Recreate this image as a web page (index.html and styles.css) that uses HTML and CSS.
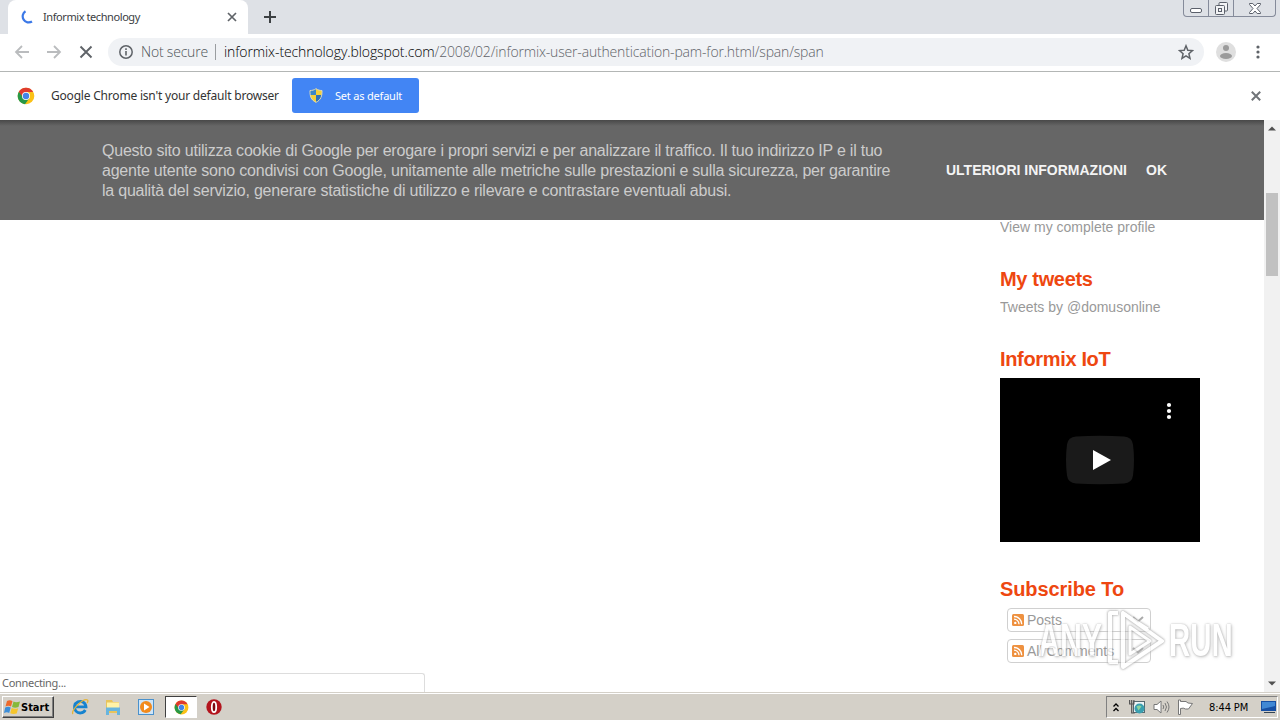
FILE: index.html
```html
<!DOCTYPE html>
<html lang="en">
<head>
  <meta charset="UTF-8">
  <title>Informix technology</title>
  <link rel="stylesheet" href="styles.css">
</head>
<body>
  <!-- Tab strip -->
  <div class="tabstrip">
    <div class="tab">
      <svg class="spinner" width="14" height="14" viewBox="0 0 14 14"><path d="M5.500 1.300A6 6 0 1 0 12 11.500" fill="none" stroke="#3b78e7" stroke-width="2.200"/></svg>
      <span class="tab-title">Informix technology</span>
      <svg width="10" height="10" viewBox="0 0 10 10"><path d="M1 1l8 8M9 1l-8 8" stroke="#5f6368" stroke-width="1.7"/></svg>
    </div>
    <svg class="new-tab" width="12" height="12" viewBox="0 0 12 12"><path d="M6 0v12M0 6h12" stroke="#3c4043" stroke-width="2"/></svg>
    <div class="win-buttons">
      <div class="win-btn"><svg width="12" height="5" viewBox="0 0 12 5"><rect x=".5" y=".5" width="11" height="4" rx="1.5" fill="#fff" stroke="#5b606b"/></svg></div>
      <div class="win-btn"><svg width="13" height="13" viewBox="0 0 13 13" fill="#f2f3f5" stroke="#5b606b"><rect x="4" y=".5" width="8.500" height="8.500" rx="1"/><rect x=".5" y="3.500" width="9" height="9" rx="1"/><rect x="3.500" y="6.500" width="3" height="3"/></svg></div>
      <div class="win-btn wide"><svg width="12" height="11" viewBox="0 0 12 11"><path d="M.5.5h3.300L6 3 8.200.5h3.300v1L8 5.500l3.500 4v1H8.200L6 8l-2.200 2.500H.5v-1L4 5.500l-3.500-4z" fill="#fff" stroke="#5b606b"/></svg></div>
    </div>
  </div>

  <!-- Toolbar -->
  <div class="toolbar">
    <div class="nav">
      <svg width="16" height="14" viewBox="0 0 16 14"><path d="M15 7H2M8 1L2 7l6 6" fill="none" stroke="#babcbe" stroke-width="1.800"/></svg>
      <svg width="16" height="14" viewBox="0 0 16 14"><path d="M1 7h13M8 1l6 6-6 6" fill="none" stroke="#babcbe" stroke-width="1.800"/></svg>
      <svg class="stop" width="14" height="14" viewBox="0 0 14 14"><path d="M1.500 1.500l11 11M12.500 1.500l-11 11" stroke="#5f6368" stroke-width="1.900"/></svg>
    </div>
    <div class="omnibox">
      <svg width="14" height="14" viewBox="0 0 14 14"><circle cx="7" cy="7" r="6.200" fill="none" stroke="#5f6368" stroke-width="1.500"/><path d="M7 6v4.500M7 3.300v1.600" stroke="#5f6368" stroke-width="1.600"/></svg>
      <span class="not-secure">Not secure</span>
      <span class="divider"></span>
      <span class="url"><span class="host">informix-technology.blogspot.com</span><span class="path">/2008/02/informix-user-authentication-pam-for.html/span/span</span></span>
      <svg class="star" width="16" height="16" viewBox="0 0 16 16"><path d="M8 1.800l1.800 4.400 4.700.4-3.600 3.100 1.100 4.600L8 11.800l-4 2.500 1.100-4.600-3.600-3.100 4.700-.4z" fill="none" stroke="#5f6368" stroke-width="1.500"/></svg>
    </div>
    <svg class="avatar" width="20" height="20" viewBox="0 0 20 20"><circle cx="10" cy="10" r="10" fill="#dfdfdf"/><circle cx="10" cy="6" r="3" fill="#9b9b9b"/><ellipse cx="10" cy="14" rx="6" ry="3" fill="#9b9b9b"/></svg>
    <svg class="menu" width="4" height="14" viewBox="0 0 4 14" fill="#5f6368"><circle cx="2" cy="2" r="1.600"/><circle cx="2" cy="7" r="1.600"/><circle cx="2" cy="12" r="1.600"/></svg>
  </div>

  <!-- Default browser bar -->
  <div class="infobar">
    <svg width="18" height="18" viewBox="0 0 18 18"><use href="#chrome"/></svg>
    <span class="infobar-text">Google Chrome isn't your default browser</span>
    <button class="default-btn">
      <svg width="14" height="15" viewBox="0 0 14 15"><path d="M7 .5C5 2 3 2.300 1 2.300 .8 8 2 12 7 14.500z" fill="#3b87c8"/><path d="M7 .5c2 1.500 4 1.800 6 1.800C13.200 8 12 12 7 14.500z" fill="#f4d03a"/><path d="M1 7h6v7.500C3 12.500 1.500 10 1 7z" fill="#f4d03a"/><path d="M13 7H7v7.500c4-2 5.500-4.500 6-7.500z" fill="#2f71b8"/><path d="M7 .7C5 2.100 3 2.500 1 2.500 .8 8 2 12 7 14.300c5-2.300 6.200-6.300 6-11.800-2 0-4-.4-6-1.800z" fill="none" stroke="#d9d9bd"/></svg>
      <span>Set as default</span>
    </button>
    <svg class="infobar-close" width="10" height="10" viewBox="0 0 10 10"><path d="M.8.8l8.400 8.400M9.200.8L.8 9.200" stroke="#707478" stroke-width="2"/></svg>
  </div>

  <!-- Web page -->
  <div class="viewport">
    <div class="page">
      <div class="cookie-bar">
        <p class="cookie-text">Questo sito utilizza cookie di Google per erogare i propri servizi e per analizzare il traffico. Il tuo indirizzo IP e il tuo<br>agente utente sono condivisi con Google, unitamente alle metriche sulle prestazioni e sulla sicurezza, per garantire<br>la qualità del servizio, generare statistiche di utilizzo e rilevare e contrastare eventuali abusi.</p>
        <a class="cookie-link more">ULTERIORI INFORMAZIONI</a>
        <a class="cookie-link">OK</a>
      </div>
      <div class="sidebar">
        <a class="profile">View my complete profile</a>
        <h2 class="tweets-title">My tweets</h2>
        <a class="tweets">Tweets by @domusonline</a>
        <h2 class="iot-title">Informix IoT</h2>
        <div class="video">
          <svg width="200" height="164" viewBox="0 0 200 164"><path d="M76 58.500q24-1.500 48 0 8 .5 9 8 2 15.500 0 31-1 7.500-9 8-24 1.500-48 0-8-.5-9-8-2-15.500 0-31 1-7.500 9-8z" fill="#1a1a1a"/><path d="M93 72v20l18-10z" fill="#fff"/><g fill="#fff"><circle cx="169" cy="27" r="2.100"/><circle cx="169" cy="33" r="2.100"/><circle cx="169" cy="39" r="2.100"/></g></svg>
        </div>
        <h2 class="subscribe-title">Subscribe To</h2>
        <div class="feed">
          <svg width="12" height="12" viewBox="0 0 12 12"><use href="#rss"/></svg>
          <span class="feed-name posts">Posts</span>
          <svg class="chevron" width="12" height="7" viewBox="0 0 12 7"><path d="M1 1l5 4.500L11 1" fill="none" stroke="#aaa" stroke-width="2"/></svg>
        </div>
        <div class="feed">
          <svg width="12" height="12" viewBox="0 0 12 12"><use href="#rss"/></svg>
          <span class="feed-name">All Comments</span>
          <svg class="chevron" width="12" height="7" viewBox="0 0 12 7"><path d="M1 1l5 4.500L11 1" fill="none" stroke="#aaa" stroke-width="2"/></svg>
        </div>
      </div>
      <div class="status">Connecting...</div>
    </div>
    <div class="scrollbar">
      <svg width="8" height="5" viewBox="0 0 8 5"><path d="M0 4.500L4 .5l4 4z" fill="#505050"/></svg>
      <div class="thumb"></div>
      <svg class="down" width="8" height="5" viewBox="0 0 8 5"><path d="M0 .5h8l-4 4z" fill="#505050"/></svg>
    </div>
  </div>

  <!-- Watermark -->
  <div class="watermark">
    <span class="wm-any">ANY</span>
    <svg class="wm-logo" width="60" height="62" viewBox="0 0 60 62" fill="none" stroke="#fff" stroke-width="4" stroke-linejoin="round"><path d="M12 4H4v49h8M17 4v54l39-26z"/><path d="M24 18v27l20-13zM17 4l25 16" stroke-width="3"/></svg>
    <span class="wm-run">RUN</span>
  </div>

  <!-- Taskbar -->
  <div class="taskbar">
    <div class="start">
      <svg width="17" height="16" viewBox="0 0 17 16"><path d="M3 2q3-1.500 5.500.2L7 7.500Q4.500 6 1.500 7.500z" fill="#ee6a2c"/><path d="M9.500 2.600Q12 4 16 2.500L14.500 8Q11 9.300 8 7.900z" fill="#86b93a"/><path d="M1.200 8.500q3-1.500 5.500 0L5.200 14Q3 12.500 0 14z" fill="#3d8ed8"/><path d="M7.700 9q3 1.500 6.500.2L12.700 14.500Q9 15.500 6.200 14.200z" fill="#f5c52c"/></svg>
      <span>Start</span>
    </div>
    <div class="launch">
      <svg width="18" height="18" viewBox="0 0 18 18"><path d="M14.300 12A5.800 5.800 0 1 1 15 8.800H5" fill="none" stroke="#1683cf" stroke-width="2.800"/><path d="M2 16C-1 13 12 0 16.500 2q1 1-.5 3" fill="none" stroke="#e5b437" stroke-width="1.300"/></svg>
      <svg width="18" height="18" viewBox="0 0 18 18"><path d="M2 2h6l1 2h6v11H2z" fill="#e8c45c"/><path d="M3 4.500h12V12H3z" fill="#fff3a8"/><path d="M2 9.500h14V17h-3v-4H5v4H2z" fill="#67b5df"/></svg>
      <svg width="18" height="18" viewBox="0 0 18 18"><rect x="1.500" y="1.500" width="15" height="15" fill="#cfe5f7" stroke="#4a91cc"/><circle cx="9" cy="9" r="6" fill="#f28a1c"/><path d="M7 5.500v7L12.500 9z" fill="#fff"/></svg>
    </div>
    <div class="running"><svg width="15" height="15" viewBox="0 0 18 18"><use href="#chrome"/></svg></div>
    <svg class="opera" width="16" height="16" viewBox="0 0 16 16"><circle cx="8" cy="8" r="7.700" fill="#b3141d"/><ellipse cx="8" cy="8" rx="2.200" ry="5.200" fill="#7d0910" stroke="#fff" stroke-width="1.800"/></svg>
    <div class="tray">
      <svg class="expand" width="6" height="9" viewBox="0 0 6 9"><path d="M.5 3.500L3 1l2.500 2.500M.5 8L3 5.500 5.500 8" fill="none" stroke="#000" stroke-width="1.300"/></svg>
      <svg width="17" height="16" viewBox="0 0 17 16"><rect x="4.500" y="2.500" width="11" height="11" fill="#eef5f7" stroke="#56686f"/><circle cx="10.500" cy="9.500" r="5" fill="#3a9fb0"/><path d="M7.500 7.500q3-2 5 0l-3 4z" fill="#8dd49b"/><path d="M.6 1v4h4.300V1M2.700 1v13h3" fill="none" stroke="#555" stroke-width="1.200"/></svg>
      <svg width="17" height="16" viewBox="0 0 17 16"><path d="M1 5.500h3L8 2v12l-4-3.500H1z" fill="#fff" stroke="#777"/><path d="M10 6q1.500 2 0 4M12 4q3 4 0 8M14 2.500q4 5.500 0 11" fill="none" stroke="#777"/></svg>
      <svg width="17" height="16" viewBox="0 0 17 16"><path d="M1.500 1v14.500h2V9.500q3-1 5 .5h3l4-5.500-4.500-.5-2-1.500H3.500V1z" fill="#fff" stroke="#777"/></svg>
      <span class="clock">8:44 PM</span>
      <svg width="16" height="14" viewBox="0 0 16 14"><path d="M0 1h15v10H0z" fill="#174fa3"/><path d="M1 2h13v4L1 9z" fill="#4188d4"/><path d="M3 12h11v1H3z" fill="#345"/></svg>
    </div>
  </div>

  <!-- Shared icons -->
  <svg class="defs" width="0" height="0">
    <symbol id="chrome" viewBox="0 0 18 18"><circle cx="9" cy="9" r="8.300" fill="#fbc116"/><path d="M9 9L1.800 4.800A8.300 8.300 0 0 0 8 17.200L12.500 11z" fill="#279847"/><path d="M9 9H5L1.800 4.800A8.300 8.300 0 0 1 16.200 5H9z" fill="#df3b2f"/><circle cx="9" cy="9" r="4" fill="#fff"/><circle cx="9" cy="9" r="3.200" fill="#4384e8"/></symbol>
    <symbol id="rss" viewBox="0 0 12 12"><rect width="12" height="12" rx="1.500" fill="#ee9140"/><circle cx="3.300" cy="8.900" r="1.200" fill="#fff"/><path d="M2 5.200a5 5 0 0 1 5 5M2 2.500a7.600 7.600 0 0 1 7.700 7.700" fill="none" stroke="#fff" stroke-width="1.300"/></symbol>
  </svg>
</body>
</html>
```

FILE: styles.css
```css
* {
  box-sizing: border-box;
  margin: 0;
  padding: 0;
}

body {
  width: 1280px;
  height: 720px;
  overflow: hidden;
  display: flex;
  flex-direction: column;
  background: #fff;
  font-family: "Liberation Sans", Arial, sans-serif;
  white-space: nowrap;
}

svg {
  display: block;
  flex: none;
}

/* Tab strip */
.tabstrip {
  height: 34px;
  background: #dee1e6;
  display: flex;
  padding-left: 8px;
}

.tab {
  width: 240px;
  background: #fff;
  border-radius: 8px 8px 0 0;
  display: flex;
  align-items: center;
  padding: 0 11px 0 12px;
}

.tab-title {
  flex: 1;
  margin-left: 9px;
  margin-top: -1px;
  font: 11px "Noto Sans", sans-serif;
  letter-spacing: -0.42px;
  color: #3c4043;
}

.new-tab {
  margin: 11px 0 0 16px;
}

.win-buttons {
  display: flex;
  height: 17px;
  margin-left: auto;
  margin-right: 4px;
  border: 1px solid #858b9a;
  border-top: none;
  border-radius: 0 0 4px 4px;
}

.win-btn {
  width: 25px;
  display: flex;
  align-items: center;
  justify-content: center;
  border-right: 1px solid #858b9a;
}

.win-btn:first-child {
  padding-top: 5px;
}

.win-btn.wide {
  width: 41px;
  border-right: none;
}

/* Toolbar */
.toolbar {
  height: 38px;
  display: flex;
  align-items: center;
  border-bottom: 1px solid #b3b6b5;
  padding: 0 0 2px 14px;
}

.nav {
  display: flex;
  gap: 16px;
  width: 94px;
}

.stop {
  margin-left: 1px;
}

.omnibox {
  width: 1096px;
  height: 28px;
  border-radius: 14px;
  background: #f0f2f5;
  display: flex;
  align-items: center;
  padding: 0 10px 0 11px;
  font: 300 14px "Open Sans", sans-serif;
}

.not-secure {
  margin-left: 8px;
  width: 67px;
  letter-spacing: -0.2px;
  color: #4d5257;
}

.divider {
  width: 1px;
  height: 16px;
  margin: 0 8px 0 7px;
  background: #9a9da0;
}

.host {
  letter-spacing: -0.1px;
  color: #000;
}

.path {
  letter-spacing: -0.17px;
  color: #5f6368;
}

.star {
  margin-left: auto;
}

.avatar {
  margin-left: 12px;
}

.menu {
  margin-left: 20px;
}

/* Default browser bar */
.infobar {
  height: 48px;
  display: flex;
  align-items: center;
  padding: 0 19px 1px 17px;
}

.infobar-text {
  width: 241px;
  padding-left: 16px;
  font: 12px "Noto Sans", sans-serif;
  letter-spacing: -0.2px;
  color: #333;
}

.default-btn {
  width: 127px;
  height: 35px;
  margin-left: 16px;
  border: none;
  border-radius: 3px;
  background: #4285f4;
  color: #fff;
  display: flex;
  align-items: center;
  padding: 0 0 1px 17px;
  gap: 12px;
  font: 11px "Noto Sans", sans-serif;
  letter-spacing: -0.2px;
}

.infobar-close {
  margin-left: auto;
}

/* Web page */
.viewport {
  height: 572px;
  display: flex;
}

.page {
  width: 1264px;
  display: flex;
  flex-direction: column;
}

.cookie-bar {
  height: 100px;
  background: linear-gradient(#484848, #666 6px);
  display: flex;
  align-items: center;
  padding-left: 102px;
}

.cookie-text {
  width: 844px;
  padding-top: 2px;
  font-size: 16px;
  line-height: 20px;
  letter-spacing: -0.22px;
  color: #ccc;
}

.cookie-link {
  font-size: 14px;
  font-weight: bold;
  color: #f4f4f4;
}

.cookie-link.more {
  width: 200px;
}

.sidebar {
  width: 200px;
  height: 453px;
  margin-left: 1000px;
  overflow: hidden;
  font-size: 14px;
  color: #999;
}

.sidebar a {
  display: block;
  height: 20px;
  line-height: 20px;
}

.sidebar .profile {
  margin-top: -3px;
}

.sidebar h2 {
  height: 24px;
  font-size: 20px;
  line-height: 24px;
  letter-spacing: -0.34px;
  color: #ee4710;
}

.sidebar .tweets-title {
  margin-top: 30px;
  margin-bottom: 6px;
}

.sidebar .iot-title {
  margin-top: 30px;
  margin-bottom: 7px;
}

.video {
  width: 200px;
  height: 164px;
  background: #000;
}

.sidebar .subscribe-title {
  margin-top: 35px;
  margin-bottom: 7px;
  letter-spacing: -0.1px;
}

.feed {
  width: 144px;
  height: 24px;
  margin: 0 0 7px 7px;
  border: 1px solid #d0d0d0;
  border-radius: 4px;
  display: flex;
  align-items: center;
  padding: 0 6px 1px 4px;
}

.feed-name {
  margin-left: 3px;
  padding-top: 1px;
}

.chevron {
  margin-left: auto;
}

.status {
  width: 425px;
  height: 19px;
  border: 1px solid #ddd;
  border-left: none;
  border-bottom: none;
  border-radius: 0 3px 0 0;
  padding-left: 2px;
  font: 11px/18px "Noto Sans", sans-serif;
  letter-spacing: -0.3px;
  color: #666;
}

.scrollbar {
  width: 16px;
  background: #f1f1f1;
  display: flex;
  flex-direction: column;
  align-items: center;
  padding: 6px 0;
}

.thumb {
  width: 12px;
  height: 83px;
  margin-top: 62px;
  background: #c1c1c1;
}

.down {
  margin-top: auto;
}

/* Watermark lies over the sidebar */
.watermark {
  position: absolute;
  left: 1038px;
  top: 609px;
  height: 62px;
  display: flex;
  align-items: center;
  opacity: 0.75;
  font: bold 46px "Liberation Sans", sans-serif;
  color: #fff;
  text-shadow: 0 0 2px #999, 1px 1px 4px #aaa;
}

.wm-logo {
  filter: drop-shadow(0 0 1px #999) drop-shadow(0 0 1px #bbb);
}

.wm-any,
.wm-run {
  display: block;
  width: 68px;
  transform: scaleX(0.66);
  transform-origin: left;
}

.wm-run {
  width: 64px;
  margin-left: 3px;
  transform: scaleX(0.64);
}

/* Taskbar */
.taskbar {
  height: 28px;
  background: #d4d0c8;
  border-top: 1px solid #d4d0c8;
  box-shadow: inset 0 1px #fff;
  display: flex;
  align-items: center;
  padding: 1px 2px 0;
  font: 11px "DejaVu Sans Condensed", "DejaVu Sans", sans-serif;
}

.start {
  width: 52px;
  height: 22px;
  border: 1px solid;
  border-color: #fff #404040 #404040 #fff;
  box-shadow: inset -1px -1px #808080;
  display: flex;
  align-items: center;
  font-weight: bold;
  padding-left: 1px;
}

.launch {
  display: flex;
  gap: 15px;
  margin-left: 17px;
}

.running {
  width: 32px;
  height: 22px;
  margin-left: 10px;
  border: 1px solid;
  border-color: #404040 #fff #fff #404040;
  background: #fff;
  display: flex;
  align-items: center;
  justify-content: center;
}

.opera {
  margin-left: 9px;
}

.tray {
  width: 172px;
  height: 22px;
  margin-left: auto;
  border: 1px solid;
  border-color: #808080 #fff #fff #808080;
  display: flex;
  align-items: center;
  padding-left: 6px;
  gap: 7px;
}

.expand {
  margin-right: 3px;
}

.clock {
  width: 44px;
  margin: 0 2px 0 8px;
  letter-spacing: -0.1px;
}

.defs {
  position: absolute;
}
```
